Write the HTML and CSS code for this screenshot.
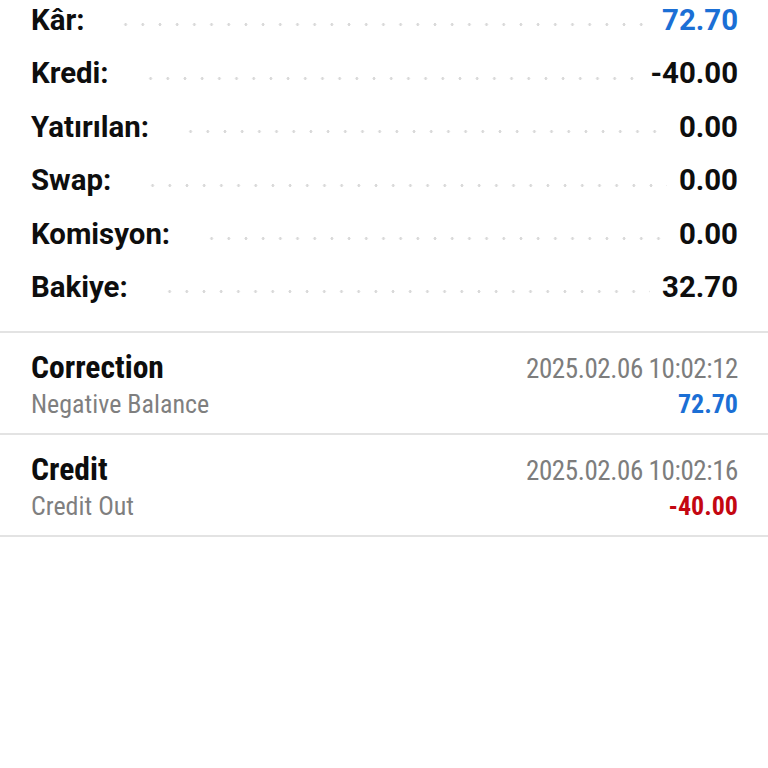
FILE: index.html
```html
<!DOCTYPE html>
<html lang="tr">
<head>
<meta charset="utf-8">
<link rel="stylesheet" href="styles.css">
</head>
<body>
<div class="summary">
  <div class="row"><span class="label">Kâr:</span><span class="dots"></span><span class="value blue">72.70</span></div>
  <div class="row"><span class="label">Kredi:</span><span class="dots"></span><span class="value">-40.00</span></div>
  <div class="row"><span class="label">Yatırılan:</span><span class="dots"></span><span class="value">0.00</span></div>
  <div class="row"><span class="label">Swap:</span><span class="dots"></span><span class="value">0.00</span></div>
  <div class="row"><span class="label">Komisyon:</span><span class="dots"></span><span class="value">0.00</span></div>
  <div class="row"><span class="label">Bakiye:</span><span class="dots"></span><span class="value">32.70</span></div>
</div>
<div class="deals">
  <div class="deal">
    <div class="line"><span class="title">Correction</span><span class="date">2025.02.06 10:02:12</span></div>
    <div class="line"><span class="sub">Negative Balance</span><span class="amount blue">72.70</span></div>
  </div>
  <div class="deal">
    <div class="line"><span class="title">Credit</span><span class="date">2025.02.06 10:02:16</span></div>
    <div class="line"><span class="sub">Credit Out</span><span class="amount red">-40.00</span></div>
  </div>
</div>
</body>
</html>
```
FILE: styles.css
```css
html, body {
  margin: 0;
  padding: 0;
  background: #ffffff;
}
body {
  font-family: Roboto, "Noto Sans", sans-serif;
  color: #111111;
  overflow: hidden;
  height: 768px;
}
.summary {
  margin-top: -6px;
  padding: 0 30px 17px 31px;
  border-bottom: 2px solid #e3e3e3;
}
.row {
  display: flex;
  align-items: baseline;
  height: 53.4px;
  line-height: 53.4px;
  font-size: 29.4px;
  font-weight: 700;
  color: #0e0e0e;
}
.label {
  flex: none;
}
.dots {
  flex: 1;
  align-self: flex-end;
  height: 3px;
  margin: 0 12px 21px 33px;
  background-image: radial-gradient(circle, #d9d9d9 1.2px, transparent 1.7px);
  background-size: 17.2px 3px;
  background-repeat: repeat-x;
  background-position: left center;
}
.value {
  flex: none;
}
.blue { color: #1b6fd5; }
.red { color: #c40712; }
.deal {
  padding: 15.5px 30px 11.5px 31px;
  border-bottom: 2px solid #e3e3e3;
  font-family: "Roboto Condensed", Roboto, sans-serif;
  font-stretch: condensed;
}
.line {
  display: flex;
  justify-content: space-between;
  align-items: baseline;
}
.title {
  font-size: 31.6px;
  font-weight: 700;
  line-height: 37px;
  color: #0d0d0d;
}
.date {
  font-size: 27px;
  letter-spacing: -0.4px;
  color: #7d7d7d;
  line-height: 35px;
}
.sub {
  font-size: 26px;
  color: #7f7f7f;
  line-height: 35px;
}
.amount {
  font-size: 26px;
  font-weight: 700;
  line-height: 35px;
}
```
